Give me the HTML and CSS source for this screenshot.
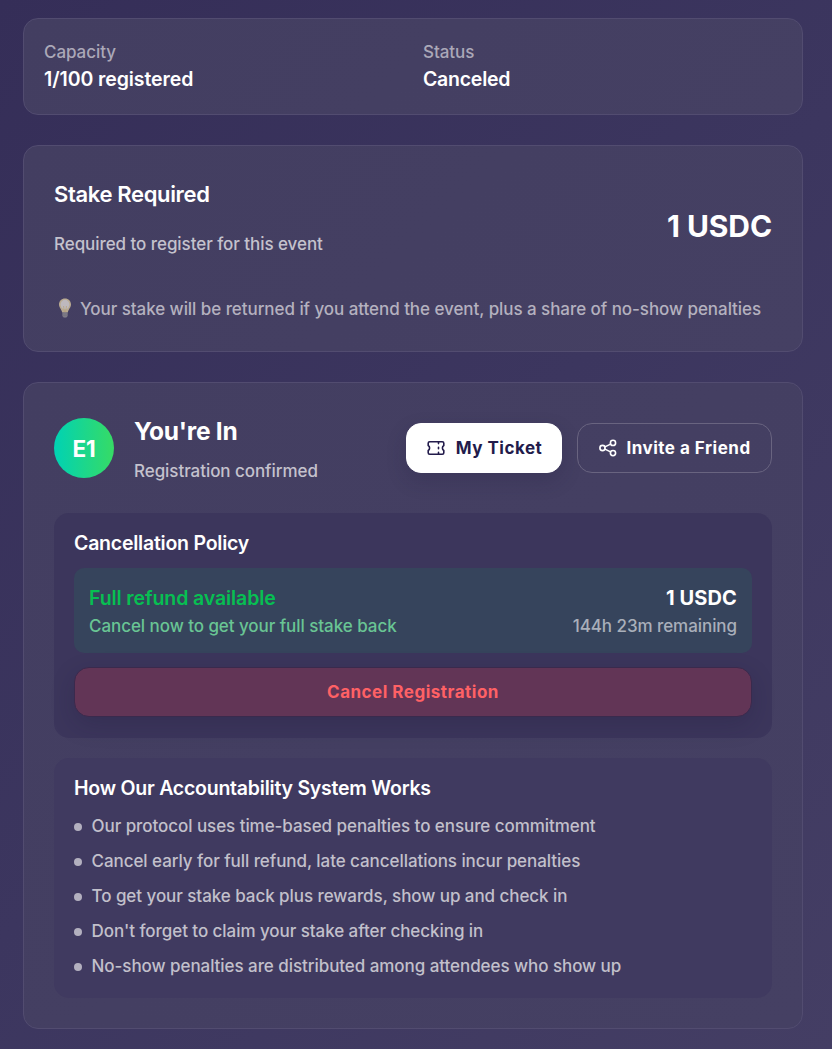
FILE: index.html
```html
<!DOCTYPE html>
<html lang="en">
<head>
<meta charset="utf-8">
<title>Event registration</title>
<link rel="stylesheet" href="styles.css">
</head>
<body>
<main class="page">
  <section class="card facts">
    <div><p class="label">Capacity</p><p class="value value-count">1/100 registered</p></div>
    <div><p class="label">Status</p><p class="value">Canceled</p></div>
  </section>

  <section class="card stake">
    <div class="stake-row">
      <div class="stake-copy">
        <h2 class="stake-title">Stake Required</h2>
        <p class="muted">Required to register for this event</p>
      </div>
      <p class="amount">1 USDC</p>
    </div>
    <p class="hint">
      <svg class="bulb" viewBox="0 0 22 22" aria-hidden="true">
        <path d="M11 1.5c-3.5 0-6 2.6-6 6 0 3.1 2.5 4.5 3.2 8h5.600c.7-3.5 3.2-4.9 3.2-8 0-3.4-2.500-6-6-6z" fill="#b9aa91"/>
        <ellipse cx="11" cy="7.6" rx="4.4" ry="4.8" fill="#beb9bd"/>
        <path d="M9.5 9l1 6h1l1-6" fill="none" stroke="#b7a57e" stroke-width=".8"/>
        <path d="M8.4 15.5h5.2v3.6l-1.3 1.4H9.7l-1.3-1.4z" fill="#85828d"/>
        <path d="M8.4 17h5.2M8.6 18.8h4.8" stroke="#6c6877" stroke-width=".7"/>
      </svg>
      <span>Your stake will be returned if you attend the event, plus a share of no-show penalties</span>
    </p>
  </section>

  <section class="card registration">
    <header class="reg-head">
      <div class="avatar">E1</div>
      <div class="reg-copy">
        <h2 class="reg-title">You're In</h2>
        <p class="muted">Registration confirmed</p>
      </div>
      <div class="actions">
        <button class="btn btn-light">
          <svg class="icon" viewBox="0 0 20 20" aria-hidden="true">
            <path d="M3.700 3.700h12.600c.9 0 1.500.6 1.500 1.500v2.300c-.9.5-1.400 1.400-1.400 2.500s.5 2 1.400 2.500v2.300c0 .9-.6 1.500-1.500 1.500H3.700c-.9 0-1.500-.6-1.500-1.500v-2.300c.9-.5 1.400-1.400 1.400-2.500s-.5-2-1.400-2.500V5.200c0-.9.6-1.500 1.500-1.500z"/>
            <path d="M12.500 4v1.600M12.500 9.200v1.600M12.500 14.400V16"/>
          </svg>
          <span>My Ticket</span>
        </button>
        <button class="btn btn-outline">
          <svg class="icon" viewBox="0 0 20 20" aria-hidden="true">
            <circle cx="4.500" cy="10" r="2.600"/><circle cx="15" cy="4.900" r="2.600"/><circle cx="15" cy="15.100" r="2.600"/>
            <path d="M6.900 8.900l5.700-2.800M6.900 11.100l5.700 2.800"/>
          </svg>
          <span>Invite a Friend</span>
        </button>
      </div>
    </header>

    <div class="panel policy">
      <h3 class="panel-title">Cancellation Policy</h3>
      <div class="refund">
        <div>
          <p class="refund-title">Full refund available</p>
          <p class="refund-note">Cancel now to get your full stake back</p>
        </div>
        <div class="refund-side">
          <p class="refund-amount">1 USDC</p>
          <p class="refund-time">144h 23m remaining</p>
        </div>
      </div>
      <button class="btn-cancel">Cancel Registration</button>
    </div>

    <div class="panel how">
      <h3 class="panel-title">How Our Accountability System Works</h3>
      <ul class="rules">
        <li>Our protocol uses time-based penalties to ensure commitment</li>
        <li>Cancel early for full refund, late cancellations incur penalties</li>
        <li>To get your stake back plus rewards, show up and check in</li>
        <li>Don't forget to claim your stake after checking in</li>
        <li>No-show penalties are distributed among attendees who show up</li>
      </ul>
    </div>
  </section>
</main>
</body>
</html>
```
FILE: styles.css
```css
* { box-sizing: border-box; margin: 0; padding: 0; }
body {
  background: linear-gradient(135deg, #352e58 0%, #3c365f 50%, #443e64 100%);
  color: #fff;
  font-family: Inter, "Liberation Sans", sans-serif;
  font-size: 17px;
  font-weight: 450;
  letter-spacing: -.06px;
  line-height: 25px;
  min-height: 1049px;
}
.page { display: flex; flex-direction: column; gap: 30px; padding: 18px 29px 20px 23px; }
.card {
  border: 1px solid #524c70;
  border-radius: 15px;
  background: linear-gradient(135deg, #433e61, #454063);
  padding: 30px;
}
.facts { display: grid; grid-template-columns: 1fr 1fr; gap: 20px; padding: 20px; height: 97px; }
.label { padding-top: 1px; line-height: 24px; color: #aba8b8; }
.value { padding-top: 1px; font-size: 19.500px; line-height: 29px; font-weight: 600; letter-spacing: -.25px; white-space: nowrap; }
.value-count { letter-spacing: -.08px; }
.stake { height: 207px; }
.stake-row { display: flex; justify-content: space-between; align-items: center; height: 101px; }
.stake-copy { align-self: flex-start; }
.stake-title { font-size: 22px; line-height: 36px; font-weight: 600; letter-spacing: -.35px; margin-bottom: 20px; }
.muted { color: #c4c2cd; }
.amount { font-size: 30px; line-height: 38px; font-weight: 700; letter-spacing: -.1px; padding-bottom: 1px; }
.hint { display: flex; align-items: center; gap: 4px; margin-top: 20px; color: #b4b1bf; white-space: nowrap; }
.bulb { width: 22px; height: 22px; flex: none; margin-top: -4px; }
.registration { height: 647px; }
.reg-head { display: flex; align-items: center; height: 70px; margin-bottom: 30px; }
.reg-copy { height: 70px; }
.avatar {
  width: 60px; height: 60px; border-radius: 50%; margin-right: 20px;
  display: flex; align-items: center; justify-content: center;
  font-size: 22.500px; font-weight: 700; letter-spacing: -.2px; padding-top: 1px;
  background: linear-gradient(90deg, #00d2b4, #37db65);
}
.reg-title { font-size: 24.500px; line-height: 36px; font-weight: 700; letter-spacing: -.25px; margin-bottom: 10px; }
.actions { display: flex; gap: 15px; margin-left: auto; }
.btn {
  height: 50px; border: 1px solid #fff; border-radius: 15px;
  display: flex; align-items: center; justify-content: center;
  font: 650 17px/25px Inter, "Liberation Sans", sans-serif; letter-spacing: .5px; white-space: nowrap;
}
.btn-light { width: 156px; gap: 10px; background: #fff; color: #221b4b; box-shadow: 0 8px 20px rgba(30, 24, 58, .2); }
.btn-outline { width: 195px; gap: 8px; border-color: #696480; background: transparent; color: #fff; }
.icon { width: 20px; height: 20px; fill: none; stroke: currentColor; stroke-width: 1.600; stroke-linecap: round; stroke-linejoin: round; }
.panel { border-radius: 15px; padding: 20px; }
.panel-title { font-size: 19.500px; line-height: 20px; font-weight: 600; letter-spacing: -.23px; white-space: nowrap; }
.policy { height: 225px; background: #3c365c; margin-bottom: 20px; }
.refund {
  display: flex; justify-content: space-between; height: 85px; padding: 15px;
  margin: 15px 0 14px; border-radius: 10px; background: #36445c; white-space: nowrap;
}
.refund-title { font-size: 19.500px; line-height: 30px; font-weight: 580; letter-spacing: -.1px; color: #07bf52; margin-bottom: 1px; }
.refund-note { color: #69c594; }
.refund-side { text-align: right; }
.refund-amount { font-size: 20px; line-height: 30px; font-weight: 700; letter-spacing: .1px; margin-bottom: 1px; }
.refund-time { color: #a9afba; }
.btn-cancel {
  width: 100%; height: 50px; border: 1px solid #3a2a4d; border-radius: 15px;
  background: #623556; color: #ff6165;
  font: 650 17px/25px Inter, "Liberation Sans", sans-serif; letter-spacing: .5px;
  box-shadow: 0 8px 25px rgba(25, 20, 50, .2);
}
.how { height: 240px; background: #403a60; }
.rules { list-style: none; display: flex; flex-direction: column; gap: 10px; margin-top: 16px; }
.rules li { display: flex; align-items: center; gap: 9.500px; color: #c2c0cb; white-space: nowrap; }
.rules li::before { content: ""; width: 8px; height: 8px; border-radius: 50%; background: #b3b0bf; flex: none; }
```
